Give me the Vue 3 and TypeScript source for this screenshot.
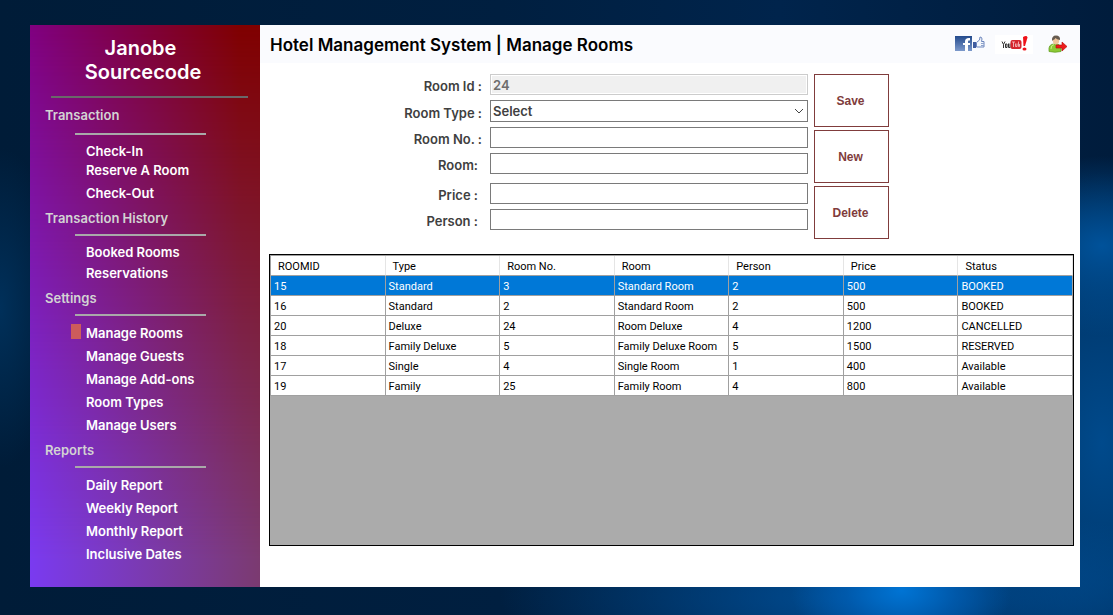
<script setup lang="ts">
import { ref } from 'vue'

interface Group { title: string; items: string[]; kind: string }
interface Room { id: number; type: string; no: string; name: string; person: number; price: number; status: string }

const groups: Group[] = [
  { title: 'Transaction', items: ['Check-In', 'Reserve A Room', 'Check-Out'], kind: 'transaction' },
  { title: 'Transaction History', items: ['Booked Rooms', 'Reservations'], kind: 'history' },
  { title: 'Settings', items: ['Manage Rooms', 'Manage Guests', 'Manage Add-ons', 'Room Types', 'Manage Users'], kind: 'settings' },
  { title: 'Reports', items: ['Daily Report', 'Weekly Report', 'Monthly Report', 'Inclusive Dates'], kind: 'reports' },
]
const active = ref('Manage Rooms')

const columns = ['ROOMID', 'Type', 'Room No.', 'Room', 'Person', 'Price', 'Status']
const rooms: Room[] = [
  { id: 15, type: 'Standard', no: '3', name: 'Standard Room', person: 2, price: 500, status: 'BOOKED' },
  { id: 16, type: 'Standard', no: '2', name: 'Standard Room', person: 2, price: 500, status: 'BOOKED' },
  { id: 20, type: 'Deluxe', no: '24', name: 'Room Deluxe', person: 4, price: 1200, status: 'CANCELLED' },
  { id: 18, type: 'Family Deluxe', no: '5', name: 'Family Deluxe Room', person: 5, price: 1500, status: 'RESERVED' },
  { id: 17, type: 'Single', no: '4', name: 'Single Room', person: 1, price: 400, status: 'Available' },
  { id: 19, type: 'Family', no: '25', name: 'Family Room', person: 4, price: 800, status: 'Available' },
]
const selected = ref(15)

const roomType = ref('Select')
const roomNo = ref('')
const roomName = ref('')
const price = ref('')
const person = ref('')
</script>

<template>
  <div class="desktop">
    <div class="window">
      <aside class="sidebar">
        <h2 class="brand">Janobe&nbsp;<br />Sourcecode</h2>
        <hr class="brand-rule" />
        <nav>
          <section v-for="g in groups" :key="g.title" class="group" :class="g.kind">
            <h3>{{ g.title }}</h3>
            <hr />
            <ul>
              <li v-for="item in g.items" :key="item" :class="{ active: item === active }">
                <a href="#" @click.prevent="active = item">{{ item }}</a>
              </li>
            </ul>
          </section>
        </nav>
      </aside>

      <main class="main">
        <header class="top">
          <h1>Hotel Management System | Manage Rooms</h1>
          <div class="links">
            <a href="#" class="fb" aria-label="Facebook">
              <svg width="30" height="17" viewBox="0 0 30 17">
                <defs>
                  <linearGradient id="fbg" x1="0" y1="0" x2="0" y2="1">
                    <stop offset="0" stop-color="#234a8c" />
                    <stop offset="1" stop-color="#7c99cb" />
                  </linearGradient>
                </defs>
                <rect x="0" y="0" width="17" height="15" fill="url(#fbg)" />
                <path d="M8 7h2V5.500Q10 2 14 2h1v2.500h-1.500Q13 4.500 13 6v1h2v2h-2v6h-3V9H8z" fill="#fff" />
                <path d="M18 6h3v6h-3z" fill="#3f5c9f" />
                <path d="M21.500 6.500L24.500 4l.5-3q2 0 2 2L26.500 5.500H29v5.500h-7.500z" fill="#f4f7fc" stroke="#6d86bd" />
                <path d="M26 7.500h3M26 9.500h3" stroke="#8fa3cc" />
              </svg>
            </a>
            <a href="#" class="yt" aria-label="YouTube">
              <svg width="38" height="19" viewBox="0 0 38 19">
                <rect width="38" height="19" fill="#fff" />
                <path d="M7 6.500l1.500 3L10 6.500M8.500 9.500V13M10.500 9h1.500v3.500h-1.500zM13.500 8.500v4H15M15 8.500V13" fill="none" stroke="#333" />
                <rect x="15.500" y="5" width="11" height="9" rx="2" fill="#d5232c" />
                <path d="M17 7h3M18.500 7v5M20.500 8.500v3H22v-3M23.500 6.500v5h1v-2.500" fill="none" stroke="#f8c9cb" stroke-width=".8" />
                <path d="M28 2q4-2 4.500.5L30 11h-1.500z" fill="#ee1119" />
                <ellipse cx="29.500" cy="14" rx="2" ry="1.500" fill="#ee1119" />
              </svg>
            </a>
            <a href="#" class="out" aria-label="Log out">
              <svg width="20" height="18" viewBox="0 0 20 18">
                <path d="M1 16.500Q0 9 6 9h3q5 1 4 7.500-6 1.500-12 0z" fill="#8cc936" stroke="#5b9a1c" stroke-width=".7" />
                <path d="M3 14q0-4 3-4.500" fill="none" stroke="#c9ed82" />
                <ellipse cx="8" cy="5.500" rx="3.200" ry="4" fill="#efc59a" />
                <path d="M4 6Q3.500.5 8 .5T12 5Q8.500 4.500 7.500 3 6.500 5 5 5z" fill="#665b50" />
                <path d="M8 10h6V7l5 4.500-5 4.500v-3H8z" fill="#ed1c1c" stroke="#b50b0b" stroke-width=".6" />
              </svg>
            </a>
          </div>
        </header>

        <form class="form" @submit.prevent>
          <div class="fields">
            <label for="rid">Room Id :</label>
            <input id="rid" type="text" value="24" disabled />
            <label for="rtype">Room Type :</label>
            <div class="select">
              <select id="rtype" v-model="roomType">
                <option>Select</option>
                <option>Standard</option>
                <option>Deluxe</option>
                <option>Family Deluxe</option>
                <option>Single</option>
                <option>Family</option>
              </select>
              <svg width="10" height="6" viewBox="0 0 10 6"><path d="M1 1l4 4 4-4" fill="none" stroke="#444" /></svg>
            </div>
            <label for="rno">Room No. :</label>
            <input id="rno" v-model="roomNo" type="text" />
            <label for="rname" class="near">Room:</label>
            <input id="rname" v-model="roomName" type="text" />
            <label for="rprice" class="near">Price :</label>
            <input id="rprice" v-model="price" type="text" />
            <label for="rperson" class="near">Person :</label>
            <input id="rperson" v-model="person" type="text" />
          </div>
          <div class="actions">
            <button type="submit">Save</button>
            <button type="button">New</button>
            <button type="button">Delete</button>
          </div>
        </form>

        <div class="sheet">
          <table>
            <thead>
              <tr><th v-for="c in columns" :key="c" scope="col">{{ c }}</th></tr>
            </thead>
            <tbody>
              <tr v-for="r in rooms" :key="r.id" :class="{ selected: r.id === selected }" @click="selected = r.id">
                <td>{{ r.id }}</td>
                <td>{{ r.type }}</td>
                <td>{{ r.no }}</td>
                <td>{{ r.name }}</td>
                <td>{{ r.person }}</td>
                <td>{{ r.price }}</td>
                <td>{{ r.status }}</td>
              </tr>
            </tbody>
          </table>
        </div>
      </main>
    </div>
  </div>
</template>

<style>
body { margin: 0; }
</style>

<style scoped>
* { box-sizing: border-box; }
h1, h2, h3, ul, hr { margin: 0; padding: 0; border: 0; }
a { color: inherit; text-decoration: none; }

.desktop {
  min-height: 100vh;
  padding: 25px 33px 28px 30px;
  display: flex;
  font-family: Inter, "Liberation Sans", Arial, sans-serif;
  font-size: 13px;
  font-weight: 600;
  background:
    radial-gradient(ellipse 110px 70px at 81% 96%, #0074d4 0%, rgba(0, 96, 184, 0.7) 50%, rgba(0, 70, 140, 0) 100%),
    radial-gradient(ellipse 380px 90px at 79% 97%, rgba(0, 84, 160, 0.9) 0%, rgba(0, 60, 115, 0) 100%),
    radial-gradient(ellipse 120px 90px at 99% 40%, #00529a 0%, rgba(0, 64, 122, 0) 100%),
    radial-gradient(ellipse 140px 270px at 99% 72%, #004a8c 0%, rgba(0, 66, 126, 0.8) 50%, rgba(0, 50, 100, 0) 100%),
    radial-gradient(ellipse 60px 160px at 0% 50%, #00305a 0%, rgba(0, 40, 80, 0) 100%),
    linear-gradient(90deg, #001c38 0%, #001f40 45%, #00244c 70%, #001c3c 100%);
}
.window {
  flex: 1;
  min-width: 0;
  display: grid;
  grid-template-columns: 230px minmax(0, 1fr);
  background: #fff;
}

.sidebar {
  position: relative;
  isolation: isolate;
  padding-top: 11px;
  color: #fff;
  background: linear-gradient(90deg, #800080, #800000 92%);
}
.sidebar::before {
  content: "";
  position: absolute;
  inset: 0;
  z-index: -1;
  background: linear-gradient(90deg, #7a3af0, #7b3a70);
  mask-image: linear-gradient(transparent, #000 95%);
}
.brand {
  padding-right: 4px;
  font-size: 20px;
  font-weight: 600;
  line-height: 24px;
  text-align: center;
}
.brand-rule {
  height: 2px;
  margin: 12px 12px 7px 21px;
  background: #696969;
}
.group h3 {
  padding-left: 15px;
  font-size: 13px;
  font-weight: 600;
  line-height: 20px;
  color: #d3d3d3;
}
.group hr {
  height: 2px;
  margin: 6px 54px 6px 45px;
  background: #a9a9a9;
}
.group ul { list-style: none; }
.group li {
  height: 23px;
  line-height: 23px;
  padding-left: 41px;
  display: flex;
  align-items: flex-start;
}
.group a { padding-left: 15px; }
.active::before {
  content: "";
  width: 10px;
  height: 15px;
  margin-top: 2px;
  background: #cd5c5c;
}
.group .active a { padding-left: 5px; }
.transaction hr { margin-top: 8px; margin-bottom: 7px; }
.transaction li { height: 19px; line-height: 19px; }
.transaction li:last-child { margin-top: 4px; }
.history { margin-top: 5px; }
.history li { height: 21px; line-height: 21px; }
.settings { margin-top: 4px; }
.reports { margin-top: 3px; }

.main {
  display: flex;
  flex-direction: column;
  padding-bottom: 41px;
}
.top {
  height: 38px;
  padding: 0 12px 0 10px;
  display: flex;
  align-items: center;
  justify-content: space-between;
  background: #fafbfe;
}
.top h1 {
  padding-top: 2px;
  font-size: 17px;
  font-weight: 600;
  line-height: 22px;
  color: #000;
}
.links { display: flex; align-items: center; }
.links a { display: flex; }
.yt { margin: 0 15px 0 10px; }

.form {
  display: grid;
  grid-template-columns: minmax(0, 1fr) 75px;
  column-gap: 6px;
  padding: 11px 191px 15px 0;
}
.fields {
  display: grid;
  grid-template-columns: 230fr 318fr;
  grid-template-rows: 21px 22px 21px 21px 25px 21px;
  align-content: start;
  align-items: end;
  row-gap: 5px;
}
.fields label {
  padding: 3px 8px 0 0;
  line-height: 18px;
  text-align: right;
  color: #404040;
}
.fields label.near { padding-right: 12px; }
input, select {
  width: 100%;
  height: 21px;
  padding: 0 2px;
  border: 1px solid #7a7a7a;
  border-radius: 0;
  background: #fff;
  font: inherit;
  color: #404040;
}
input:disabled {
  border-color: #ccc;
  background: #f0f0f0;
  box-shadow: inset 0 0 0 1px #fff;
  color: #6d6d6d;
}
.select { display: grid; align-items: center; }
.select select { grid-area: 1 / 1; height: 22px; appearance: none; }
.select svg { grid-area: 1 / 1; justify-self: end; margin-right: 4px; pointer-events: none; }
.actions { display: grid; gap: 3px; }
.actions button {
  height: 53px;
  padding: 0 2px 0 0;
  border: 1px solid #803c3c;
  background: #fff;
  font: bold 12px "Liberation Sans", Arial, sans-serif;
  color: #803c3c;
}

.sheet {
  flex: 1;
  margin: 0 6px 0 9px;
  border: 1px solid #000;
  background: #ababab;
}
table {
  width: 100%;
  table-layout: fixed;
  border-collapse: separate;
  border-spacing: 0;
  border-top: 1px solid #a0a0a0;
  border-left: 1px solid #a0a0a0;
  font-family: Roboto, "Liberation Sans", sans-serif;
  font-size: 11px;
  font-weight: normal;
  color: #000;
}
th, td {
  height: 20px;
  padding: 2px 0 0 3px;
  border-right: 1px solid #a0a0a0;
  border-bottom: 1px solid #a0a0a0;
  background: #fff;
  font-weight: normal;
  line-height: 17px;
  text-align: left;
  white-space: nowrap;
}
th { padding-left: 7px; border-right-color: #e5e5e5; }
.selected td { background: #0078d7; color: #fff; }
</style>
